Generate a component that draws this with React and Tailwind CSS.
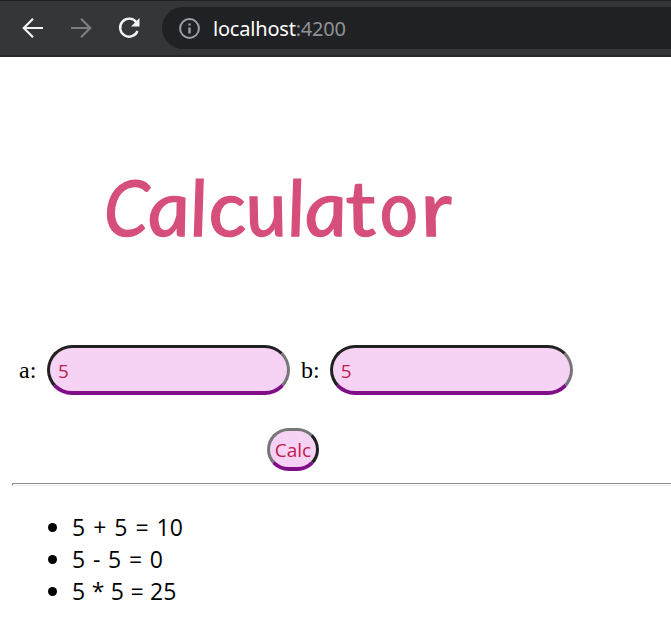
import React from "react";

const title = [
  ["C", "w-[44px] -translate-x-[6px] -skew-x-[2deg] scale-x-[.93]"],
  ["a", "w-[40px] skew-x-[6deg] scale-x-[1.08]"],
  ["l", "w-[18px] skew-x-[5deg]"],
  ["c", "w-[42px] skew-x-[6deg] scale-x-[1.08]"],
  ["u", "w-[35px] skew-x-[8deg] translate-x-[1px]"],
  ["l", "w-[25px] skew-x-[5deg] -translate-x-[1px]"],
  ["a", "w-[34px] skew-x-[6deg] scale-x-[1.08]"],
  ["t", "w-[38px] skew-x-[8deg] translate-x-[2px] scale-x-[1.15]"],
  ["o", "w-[36px] skew-x-[8deg] translate-x-[1px] scale-x-[.96]"],
  ["r", "w-[42px] skew-x-[8deg] translate-x-[1px] scale-x-[1.2]"],
];

function Toolbar() {
  return (
    <header className="flex h-[57px] items-center border-t border-b-2 border-t-[#202124] border-b-[#28292c] bg-[#35363a] font-['Noto_Sans',sans-serif]">
      <svg className="ml-[21px] size-6 shrink-0" viewBox="0 0 24 24" fill="none" stroke="#f1f3f4" strokeWidth="2.2">
        <path d="M22 12H3M12 2.8L2.8 12L12 21.2" />
      </svg>
      <svg className="ml-6 size-6 shrink-0" viewBox="0 0 24 24" fill="none" stroke="#7d7e82" strokeWidth="2.2">
        <path d="M2 12H21M12 2.8L21.2 12L12 21.2" />
      </svg>
      <svg className="ml-6 size-6 shrink-0" viewBox="0 0 24 24" fill="none">
        <path d="M19.3 6.2A9 9 0 1 0 20.5 15" stroke="#f1f3f4" strokeWidth="2.4" />
        <path d="M22.5 2V10.4H14Z" fill="#f1f3f4" />
      </svg>
      <div className="ml-[21px] flex h-[42px] flex-1 items-center rounded-l-full bg-[#202124] pl-[17px]">
        <svg className="size-[21px] shrink-0" viewBox="0 0 21 21" fill="none" stroke="#9aa0a6" strokeWidth="2">
          <circle cx="10.5" cy="10.5" r="9.4" />
          <path d="M10.5 9.5V15.5M10.5 5.5V7.6" strokeWidth="2.4" />
        </svg>
        <span className="ml-[13px] pt-px text-[20px] leading-6 tracking-[-0.2px] text-white">localhost</span>
        <span className="pt-px text-[20px] leading-6 tracking-[-0.25px] text-[#8f9194]">:4200</span>
      </div>
    </header>
  );
}

function NumberField({ label }) {
  return (
    <label className="flex items-center font-['Liberation_Serif',serif] text-[24px] leading-none text-black">
      <span className="mr-[10px] min-w-[18px]">{label}</span>
      <input
        defaultValue="5"
        className="h-[50px] w-[243px] rounded-[25px] border-[3px] border-b-4 border-t-[#212121] border-r-[#767676] border-b-[#800e87] border-l-[#212121] bg-[#f6d3f4] pt-[2px] pl-[8px] font-['Open_Sans','Noto_Sans',sans-serif] text-[19px] text-[#c01b4c] outline-none"
      />
    </label>
  );
}

export default function App() {
  return (
    <div className="h-[633px] w-full overflow-hidden bg-white">
      <Toolbar />
      <main>
        <h1 className="flex h-[288px] pt-[101px] pl-[109px] font-['Lato',sans-serif] text-[77px] leading-[96px] italic text-[#d64f7b] [-webkit-text-stroke:1.4px_#d64f7b]">
          {title.map(([letter, style], i) => (
            <span key={i} className={`flex justify-center ${style}`}>{letter}</span>
          ))}
        </h1>
        <div className="flex pl-[19px]">
          <NumberField label="a:" />
          <div className="ml-[11px]"><NumberField label="b:" /></div>
        </div>
        <button className="mt-[33px] ml-[267px] flex h-[43px] w-[52px] items-center justify-center rounded-[22px] border-[3px] border-b-4 border-t-[#767676] border-r-[#212121] border-b-[#800e87] border-l-[#767676] bg-[#f6d3f4] pt-[2px] font-['Open_Sans','Noto_Sans',sans-serif] text-[19px] leading-none text-[#c01b4c]">
          Calc
        </button>
        <hr className="mt-[12px] ml-[12px] h-[3px] border border-r-0 border-t-[#8f8f8f] border-b-[#ededed] border-l-[#8f8f8f]" />
        <ul className="mt-[25px] pl-[48px] font-['Open_Sans','Noto_Sans',sans-serif] text-[23px] leading-8 text-black">
          {[
            ["5 + 5 = 10", "[word-spacing:2px]"],
            ["5 - 5 = 0", "[word-spacing:1.75px]"],
            ["5 * 5 = 25", "[word-spacing:0.5px]"],
          ].map(([result, spacing]) => (
            <li key={result} className={`flex items-center before:mr-[15px] before:size-[9px] before:rounded-full before:bg-black ${spacing}`}>
              {result}
            </li>
          ))}
        </ul>
      </main>
    </div>
  );
}
